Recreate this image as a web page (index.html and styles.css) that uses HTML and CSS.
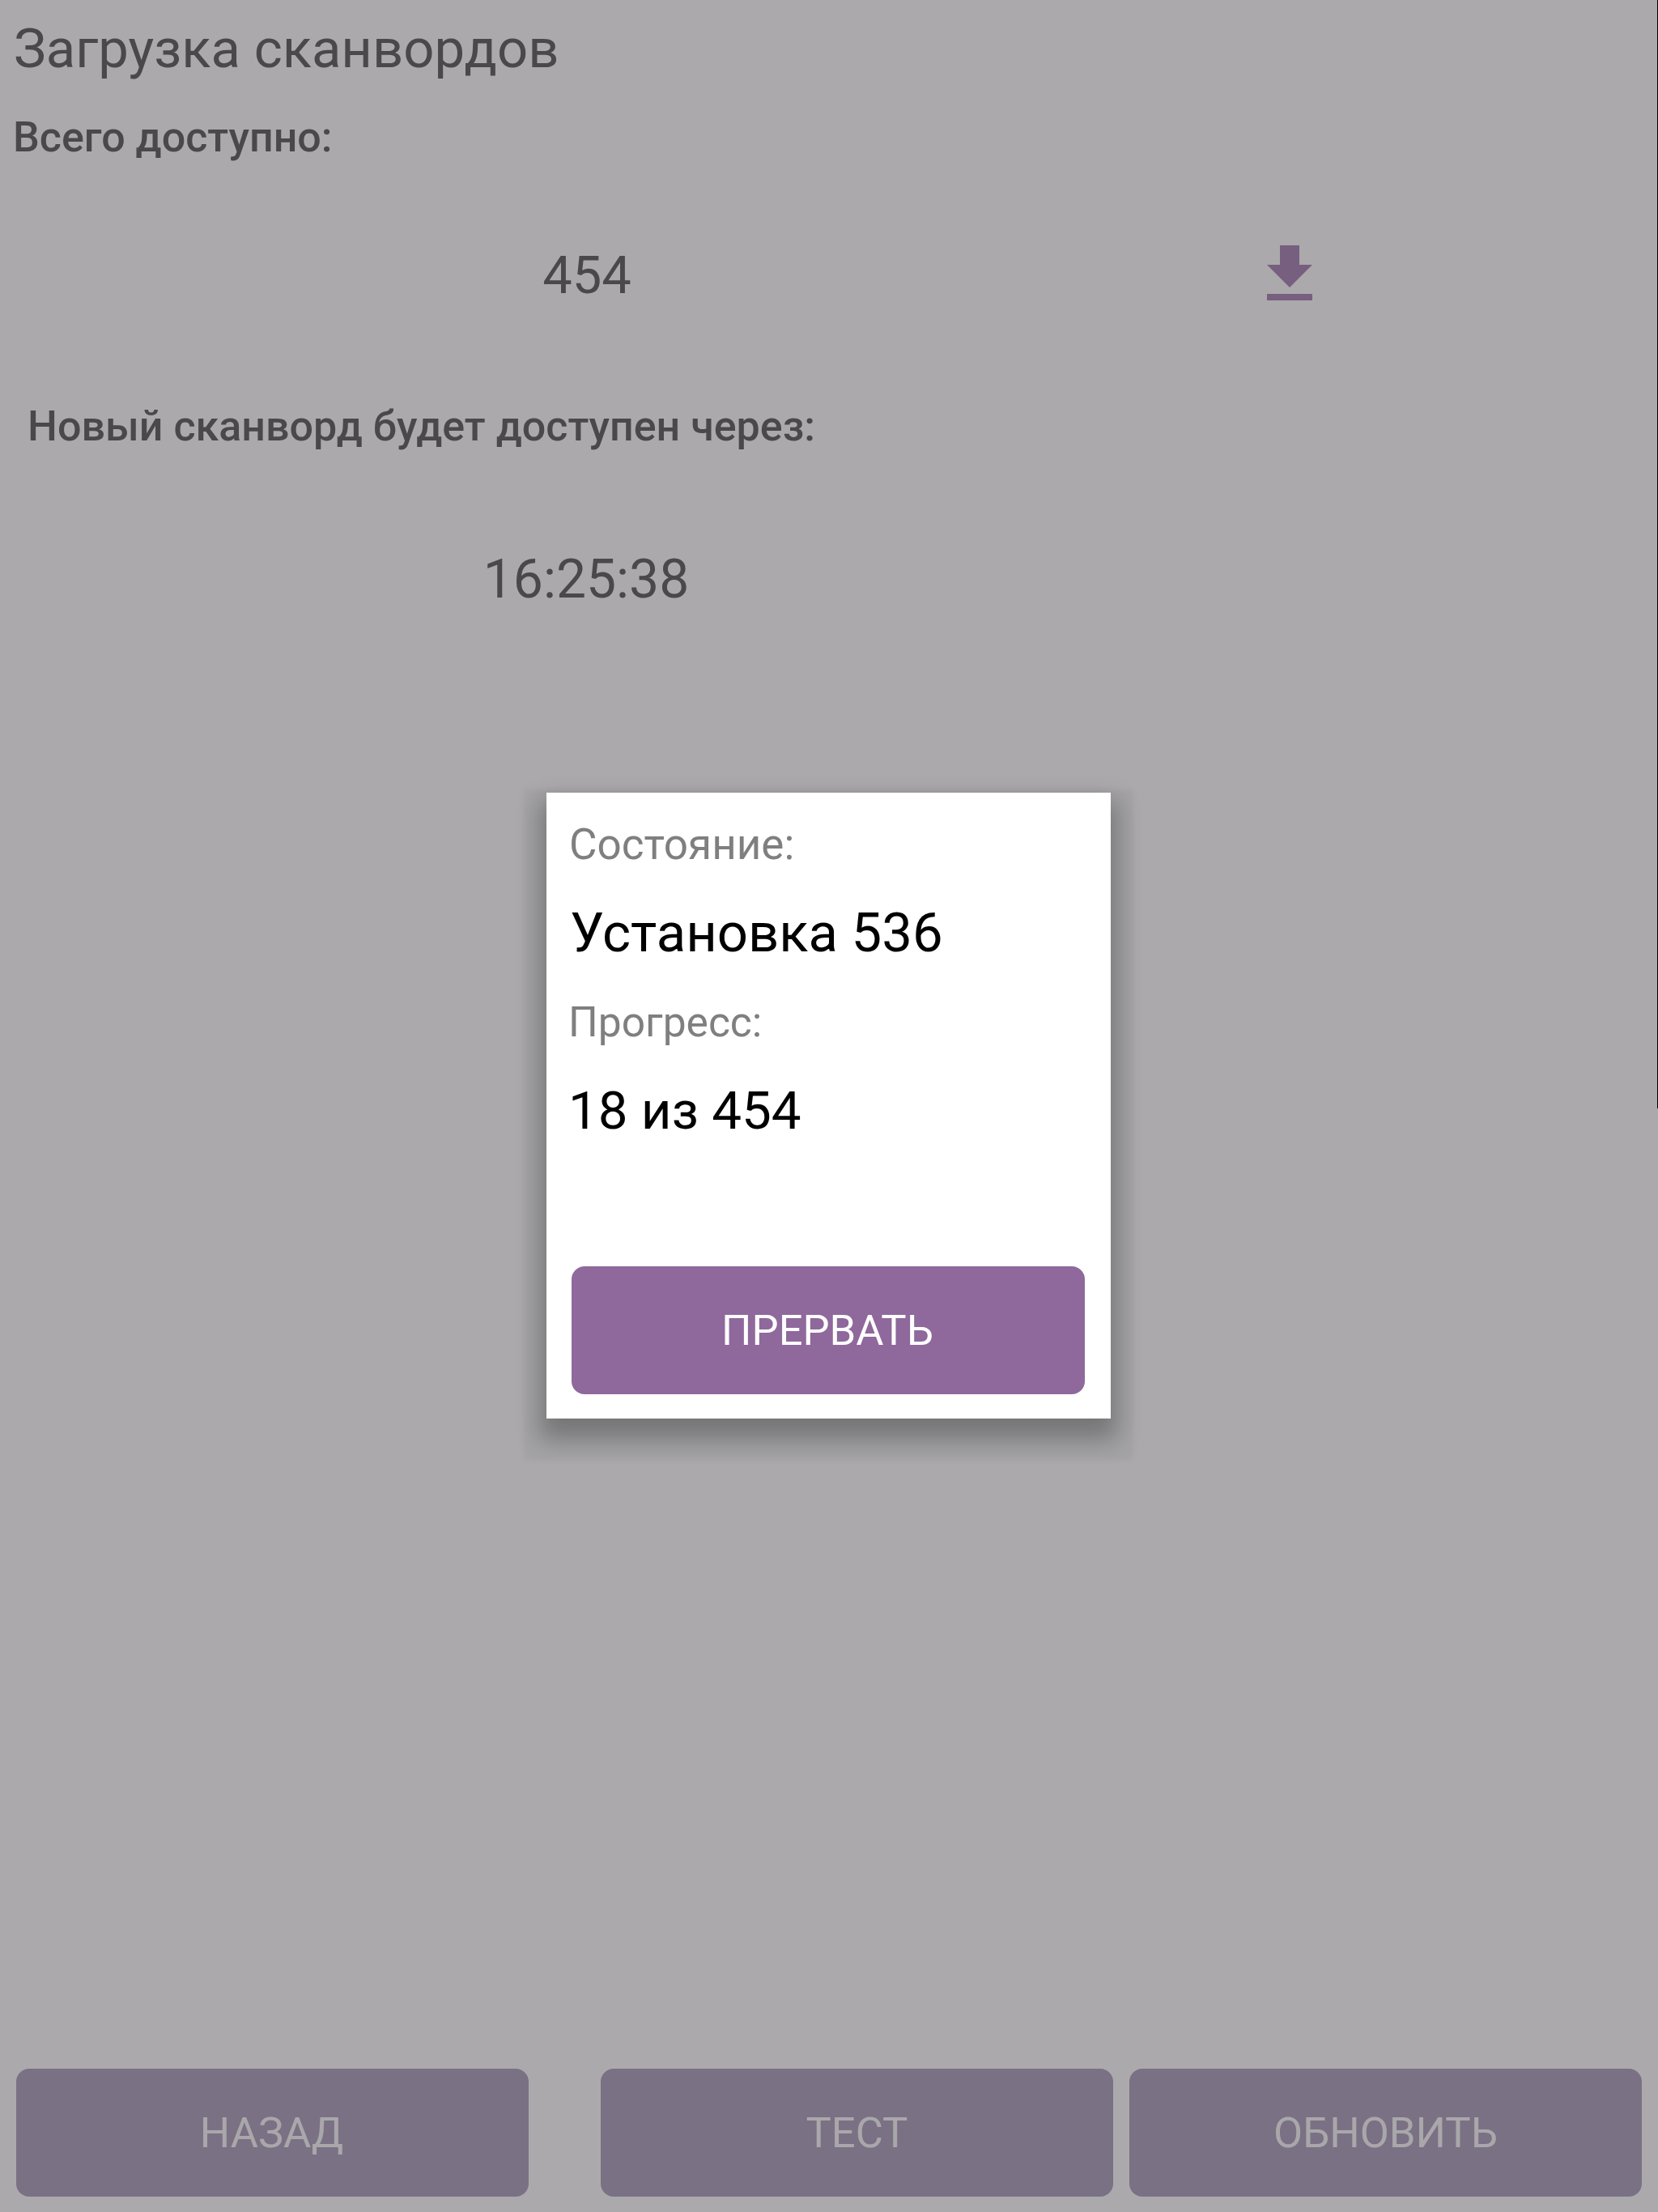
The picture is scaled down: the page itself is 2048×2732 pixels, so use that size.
FILE: index.html
```html
<!DOCTYPE html>
<html lang="ru">
<head>
<meta charset="utf-8">
<title>Загрузка сканвордов</title>
<link rel="stylesheet" href="styles.css">
</head>
<body>
<main class="screen">
  <h1 class="title">Загрузка сканвордов</h1>
  <p class="label label-total">Всего доступно:</p>
  <div class="total-row">
    <span class="value value-total">454</span>
    <svg class="download" viewBox="0 0 56 68" aria-hidden="true"><path d="M16 0h24v24h16L28 52 0 24h16zM0 60h56v8H0z"/></svg>
  </div>
  <p class="label label-next">Новый сканворд будет доступен через:</p>
  <div class="value value-time">16:25:38</div>
  <div class="spacer"></div>
  <footer class="actions">
    <button class="btn btn-back">НАЗАД</button>
    <button class="btn">ТЕСТ</button>
    <button class="btn">ОБНОВИТЬ</button>
  </footer>
</main>
<div class="overlay"></div>
<div class="edge"></div>
<section class="dialog">
  <p class="d-label d-label-1">Состояние:</p>
  <p class="d-value d-install">Установка 536</p>
  <p class="d-label d-label-2">Прогресс:</p>
  <p class="d-value d-progress">18 из 454</p>
  <button class="d-btn">ПРЕРВАТЬ</button>
</section>
</body>
</html>
```
FILE: styles.css
```css
* { box-sizing: border-box; margin: 0; padding: 0; }
html, body { width: 2048px; height: 2732px; overflow: hidden; }
body { background: #fff; font-family: Roboto, "Liberation Sans", sans-serif; position: relative; }

.screen { width: 2048px; height: 2732px; background: #fff; display: flex; flex-direction: column; }
.title { font-size: 67px; font-weight: 400; line-height: 76px; color: #585858; margin: 22px 0 0 17px; }
.label { font-size: 52px; font-weight: 500; line-height: 60px; color: #585858; }
.label-total { margin: 42px 0 0 16px; }
.total-row { display: flex; align-items: center; height: 176px; margin-top: 52px; position: relative; }
.value { font-size: 65px; font-weight: 400; line-height: 76px; color: #585858; }
.value-total { width: 1450px; text-align: center; }
.download { width: 56px; height: 68px; fill: #a580b2; margin-left: 115px; margin-top: -7px; }
.label-next { margin: 69px 0 0 34px; }
.value-time { width: 1448px; text-align: center; margin-top: 121px; font-size: 66px; }
.spacer { flex: 1; }
.actions { display: flex; padding: 0 20px 19px; }
.btn { width: 633px; height: 158px; border: 0; border-radius: 16px; background: #ab9fba; color: #fcfcfc; font: 400 52.5px/60px Roboto, "Liberation Sans", sans-serif; }
.btn-back { margin-right: 89px; padding-right: 2px; }
.btn + .btn:last-child { margin-left: 20px; }

.overlay { position: absolute; inset: 0; background: rgba(55, 50, 57, 0.42); }
.edge { position: absolute; right: 0; top: 0; width: 1px; height: 1369px; background: #000; }

.dialog { position: absolute; left: 675px; top: 979px; width: 697px; height: 773px; background: #fff; padding: 0 31px; box-shadow: 0 18px 28px 8px rgba(0, 0, 0, 0.28), 0 24px 6px 28px rgba(0, 0, 0, 0.035); }
.d-label { line-height: 60px; color: #7f7f7f; }
.d-label-1 { font-size: 53px; margin: 34px 0 0 -3px; }
.d-label-2 { font-size: 51.5px; margin: 43px 0 0 -4px; }
.d-value { font-size: 67px; line-height: 76px; color: #000; }
.d-install { margin: 41px 0 0 -2px; }
.d-progress { font-size: 65.5px; margin: 41px 0 0 -4px; }
.d-btn { display: block; width: 634px; height: 158px; margin-top: 154px; border: 0; border-radius: 16px; background: #8f689c; color: #fff; font: 400 52.5px/60px Roboto, "Liberation Sans", sans-serif; padding-right: 2px; }
```
